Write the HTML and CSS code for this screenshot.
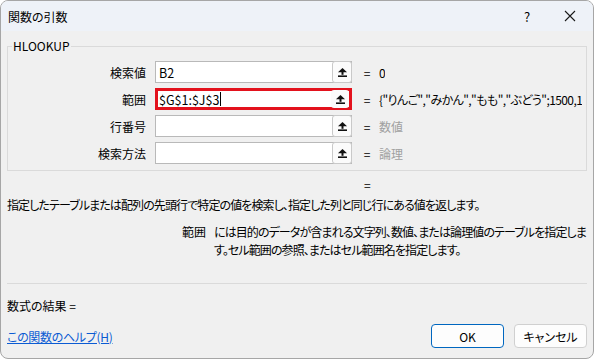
FILE: index.html
```html
<!DOCTYPE html>
<html lang="ja">
<head>
  <meta charset="UTF-8" />
  <title>関数の引数</title>
  <link rel="stylesheet" href="styles.css">
</head>
<body>

<div class="window">
  <div class="titlebar">
    <span class="title">関数の引数</span>
    <span class="title-help">?</span>
    <span class="title-close">
      <svg width="12" height="12" viewBox="0 0 12 12"><path d="M1 1 L11 11 M11 1 L1 11" stroke="#1a1a1a" stroke-width="1.1" fill="none"/></svg>
    </span>
  </div>

  <div class="content">
    <!-- 引数の入力欄 -->
    <fieldset class="group">
      <legend>HLOOKUP</legend>
      <div class="args" id="args"></div>
    </fieldset>

    <div class="result-eq">=</div>
    <div class="summary">指定したテーブルまたは配列の先頭行で特定の値を検索し、指定した列と同じ行にある値を返します。</div>

    <div class="arg-help">
      <span class="arg-help-name">範囲</span>
      <span class="arg-help-text">には目的のデータが含まれる文字列、数値、または論理値のテーブルを指定しま<br>す。セル範囲の参照、またはセル範囲名を指定します。</span>
    </div>

    <div class="separator"></div>

    <div class="formula-result">数式の結果 =</div>

    <div class="footer">
      <a href="#" class="help-link">この関数のヘルプ(H)</a>
      <div class="buttons">
        <button class="btn btn-primary">OK</button>
        <button class="btn">キャンセル</button>
      </div>
    </div>
  </div>
</div>

<script>
  const args = [
    { label: '検索値', value: 'B2', result: '0' },
    { label: '範囲', value: '$G$1:$J$3', result: '{"りんご","みかん","もも","ぶどう";1500,1', active: true },
    { label: '行番号', value: '', result: '数値', hint: true },
    { label: '検索方法', value: '', result: '論理', hint: true }
  ];

  const argsEl = document.getElementById('args');
  const arrowIcon = '<svg width="9" height="9" viewBox="0 0 9 9"><path d="M4.5 0 L9 4.2 L0 4.2 Z" fill="#111"/><rect x="3.5" y="4" width="2" height="2.8" fill="#111"/><rect x="0" y="7.4" width="9" height="1.6" fill="#111"/></svg>';

  args.forEach(arg => {
    const row = document.createElement('div');
    row.classList.add('arg-row');
    row.innerHTML = `
      <div class="arg-label">${arg.label}</div>
      <div class="arg-input${arg.active ? ' active' : ''}">
        <span class="arg-value">${arg.value}${arg.active ? '<span class="caret"></span>' : ''}</span>
        <span class="ref-btn">${arrowIcon}</span>
      </div>
      <div class="arg-eq">=</div>
      <div class="arg-result${arg.hint ? ' hint' : ''}">${arg.result}</div>
    `;
    argsEl.appendChild(row);
  });
</script>

</body>
</html>
```

FILE: styles.css
```css
* {
  box-sizing: border-box;
}
html, body {
  margin: 0;
  padding: 0;
  background: #ffffff;
  font-family: "Noto Sans CJK JP", "Noto Sans", sans-serif;
  font-size: 12px;
  color: #000;
  font-feature-settings: "palt";
}

.window {
  width: 594px;
  height: 359px;
  border: 1px solid #a6a6a6;
  border-radius: 8px;
  overflow: hidden;
  background: #f0f0f0;
  display: flex;
  flex-direction: column;
}

.titlebar {
  height: 30px;
  background: #eef2f8;
  display: flex;
  align-items: center;
  padding: 0 0 0 7px;
  flex-shrink: 0;
}
.title {
  flex: 1;
  font-size: 12px;
}
.title-help {
  width: 20px;
  text-align: center;
  font-size: 13px;
  margin-right: 10px;
}
.title-close {
  width: 46px;
  display: flex;
  justify-content: center;
}

.content {
  padding: 0 6px 0 6px;
  flex: 1;
  display: flex;
  flex-direction: column;
}

.group {
  margin: 8px 0 0 0;
  padding: 8px 0 6px 0;
  border: 1px solid #dadada;
  width: 580px;
}
.group legend {
  padding: 0 1px;
  margin-left: 4px;
  font-size: 12px;
  line-height: 14px;
}

.args {
  display: flex;
  flex-direction: column;
  gap: 5px;
}
.arg-row {
  display: flex;
  align-items: center;
  height: 22px;
}
.arg-label {
  width: 138px;
  text-align: right;
  flex-shrink: 0;
}
.arg-input {
  width: 197px;
  height: 22px;
  margin-left: 9px;
  flex-shrink: 0;
  background: #fff;
  border: 1px solid #b9b9b9;
  display: flex;
  align-items: center;
  justify-content: space-between;
  padding: 0 0 0 3px;
}
.arg-input.active {
  border: 3px solid #e3121d;
  padding-left: 1px;
}
.arg-value {
  display: flex;
  align-items: center;
  font-size: 12.5px;
}
.caret {
  display: inline-block;
  width: 1px;
  height: 14px;
  background: #000;
  margin-left: 1px;
}
.ref-btn {
  width: 20px;
  height: 22px;
  margin-right: -1px;
  border: 1px solid #c9c9c9;
  border-radius: 3px;
  background: #fbfbfb;
  display: flex;
  align-items: center;
  justify-content: center;
}
.arg-input.active .ref-btn {
  height: 18px;
  width: 18px;
  border: none;
  margin-right: 0;
}
.arg-eq {
  width: 8px;
  margin-left: 11px;
  text-align: center;
  flex-shrink: 0;
}
.arg-result {
  margin-left: 8px;
  white-space: nowrap;
  overflow: hidden;
  letter-spacing: -0.6px;
}
.arg-result.hint {
  color: #a0a0a0;
  letter-spacing: 0;
}

.result-eq {
  margin-top: 7px;
  padding-left: 357px;
  line-height: 14px;
}
.summary {
  margin-top: 5px;
  line-height: 16px;
  letter-spacing: -0.9px;
}
.arg-help {
  margin-top: 10px;
  display: flex;
  line-height: 18px;
}
.arg-help-name {
  width: 207px;
  text-align: right;
  padding-right: 8px;
  flex-shrink: 0;
}
.arg-help-text {
  white-space: nowrap;
  letter-spacing: -0.9px;
}

.separator {
  margin-top: 24px;
  height: 1px;
  background: #dadada;
  width: 580px;
}

.formula-result {
  margin-top: 14px;
  line-height: 16px;
}

.footer {
  margin-top: 10px;
  display: flex;
  align-items: center;
  justify-content: space-between;
  width: 580px;
}
.help-link {
  color: #0b5bd3;
  text-decoration: underline;
  letter-spacing: -0.3px;
}
.buttons {
  display: flex;
  gap: 10px;
}
.btn {
  width: 73px;
  height: 24px;
  font-family: inherit;
  font-size: 12px;
  background: #fdfdfd;
  border: 1px solid #d0d0d0;
  border-radius: 4px;
  color: #000;
  padding: 0;
  font-feature-settings: "palt";
}
.btn-primary {
  border-color: #0067c0;
}
```
